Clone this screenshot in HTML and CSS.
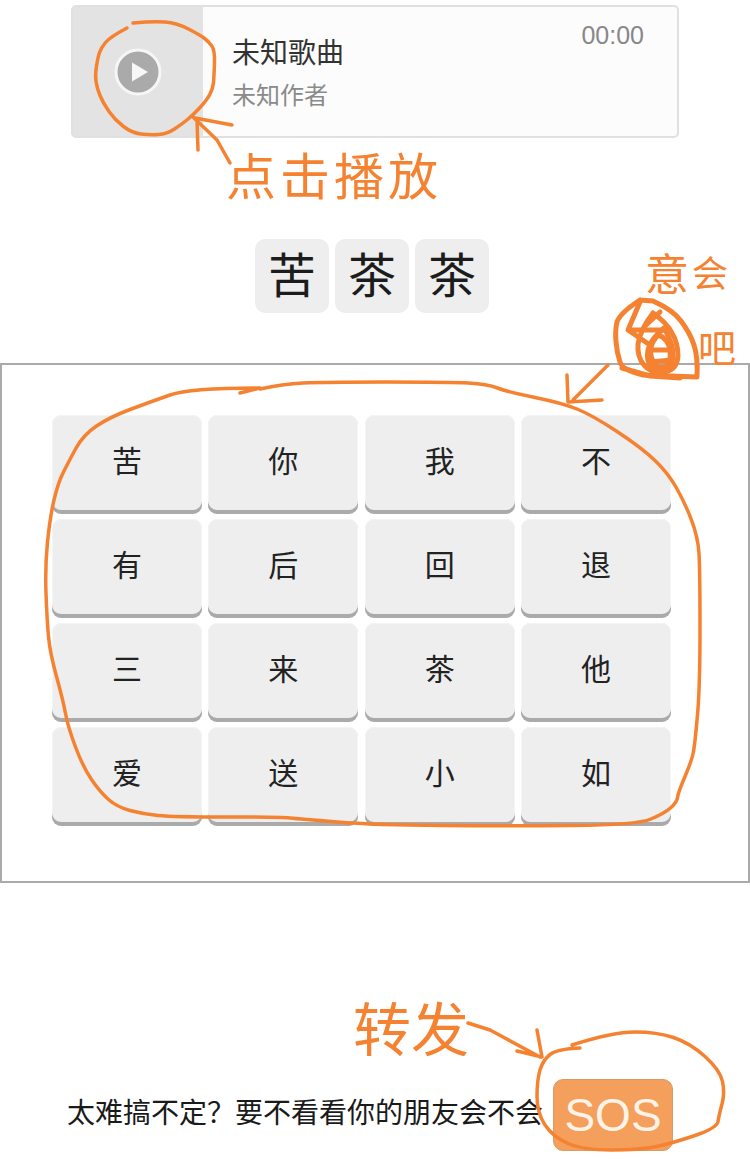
FILE: index.html
```html
<!DOCTYPE html>
<html lang="zh">
  <head>
    <meta charset="UTF-8" />
    <meta name="viewport" content="width=device-width, initial-scale=1.0" />
    <title>猜歌名</title>
    <link rel="stylesheet" href="styles.css">
  </head>
  <body>
    <main class="page">
      <div class="player">
        <div class="cover">
          <svg class="play" width="50" height="50" viewBox="0 0 50 50">
            <circle cx="25" cy="25" r="22" fill="#aaa" stroke="#f6f6f6" stroke-width="3" />
            <polygon points="19,15.5 19,34.5 35,25" fill="#f7f7f7" />
          </svg>
        </div>
        <div class="info">
          <p class="song">未知歌曲</p>
          <p class="author">未知作者</p>
        </div>
        <span class="time">00:00</span>
      </div>

      <div class="answer">
        <span class="slot">苦</span>
        <span class="slot">茶</span>
        <span class="slot">茶</span>
      </div>

      <div class="board">
        <div class="keys">
          <button class="key">苦</button>
          <button class="key">你</button>
          <button class="key">我</button>
          <button class="key">不</button>
          <button class="key">有</button>
          <button class="key">后</button>
          <button class="key">回</button>
          <button class="key">退</button>
          <button class="key">三</button>
          <button class="key">来</button>
          <button class="key">茶</button>
          <button class="key">他</button>
          <button class="key">爱</button>
          <button class="key">送</button>
          <button class="key">小</button>
          <button class="key">如</button>
        </div>
      </div>

      <div class="help">
        <p class="help-text">太难搞不定？要不看看你的朋友会不会</p>
        <button class="sos">SOS</button>
      </div>
    </main>

    <!-- pen marks on top of the screenshot -->
    <svg class="ink" width="750" height="1159" viewBox="0 0 750 1159">
      <!-- circle round the play button -->
      <path d="M127 28 Q110 37 105.5 42.5 Q101 48 99.5 52.5 Q98 57 96.5 66 Q95 75 96 81.5 Q97 88 100 95.5 Q103 103 109 111.5 Q115 120 123.5 126.5 Q132 133 141 134 Q150 135 158.5 134.5 Q167 134 174.5 129 Q182 124 187.5 119.5 Q193 115 200 107.5 Q207 100 210 94 Q213 88 213.5 82.5 Q214 77 214.5 63.5 Q215 50 211.5 45.5 Q208 41 204 38 Q200 35 188.5 29 Q177 23 165 22 Q153 21 133 23" />
      <path d="M230 163 L217 140 L193 117 M197 120 L198 150 M195 118 L232 125" />

      <!-- circle round the keys -->
      <path d="M260 389 Q283 384 303 383 Q323 382 386 382 Q450 382 468.5 383 Q487 384 497.5 388 Q508 392 535 397.5 Q562 403 577 409 Q592 415 617 431.5 Q642 448 655 460.5 Q668 473 676.5 488 Q685 503 691.5 520 Q698 537 699 553.5 Q700 570 700 628.5 Q700 687 697.5 715 Q695 743 693.5 751.5 Q692 760 685 776.5 Q678 793 677.5 797.5 Q677 802 671 807.5 Q665 813 651 819 Q637 825 572.5 825.5 Q508 826 441.5 825.5 Q375 825 337.5 822 Q300 819 290 818 Q280 817 226.5 817 Q173 817 158 815.5 Q143 814 130 810.5 Q117 807 108.5 799.5 Q100 792 91.5 779.5 Q83 767 75.5 747 Q68 727 65.5 713.5 Q63 700 56.5 676.5 Q50 653 48.5 636.5 Q47 620 46 593.5 Q45 567 47.5 542 Q50 517 54 500 Q58 483 63 473 Q68 463 75.5 449 Q83 435 96.5 426 Q110 417 130 409.5 Q150 402 170 395 Q190 388 260 388 L240 393" />

      <!-- scribbled out word and its arrow -->
      <path d="M608 365 L573 400 M567 375 L568 402 L602 400" />
      <g class="ink-heavy">
        <path d="M640 300 Q620 313 617 322 Q615 330 616 342 Q617 353 620 362 Q622 370 643 375 L697 377 Q698 357 694 345 Q690 333 681 321 Q673 310 653 301 L640 300" />
        <path d="M653 313 Q640 330 638 344 Q637 357 644 365 Q650 373 664 372 Q677 370 678 356 Q678 343 672 333 Q667 323 653 313" />
        <path d="M664 328 Q650 340 648 350 Q646 360 651 366 Q656 372 664 370 Q672 368 673 356 Q674 345 664 328" />
        <path d="M658 335 Q644 350 656 366 Q672 372 670 350 Q668 338 658 335" />
        <path d="M640 302 L628 330 L650 345 M632 330 L664 330 M652 350 L670 350 M650 362 L672 360 M660 312 L645 326 M622 368 L650 376 L680 378" />
      </g>

      <!-- circle round SOS -->
      <path d="M580 1048 Q557 1049 550 1054.5 Q543 1060 540 1070 Q537 1080 537 1096.5 Q537 1113 545 1125 Q553 1137 568 1143.5 Q583 1150 611.5 1150 Q640 1150 656.5 1146.5 Q673 1143 695 1135.5 Q717 1128 718 1121.5 Q719 1115 722 1104 Q725 1093 722.5 1081.5 Q720 1070 705 1056.5 Q690 1043 673.5 1037.5 Q657 1032 635 1032 Q613 1032 572 1045" />
      <path d="M468 1023 L490 1030 L540 1057 M537 1030 L542 1057 L517 1051" />
    </svg>
    <span class="note note-play">点击播放</span>
    <span class="note note-yi">意</span>
    <span class="note note-hui">会</span>
    <span class="note note-ba">吧</span>
    <span class="note note-send">转发</span>
  </body>
</html>
```

FILE: styles.css
```css
* {
  margin: 0;
  padding: 0;
  box-sizing: border-box;
}
body {
  position: relative;
  width: 750px;
  height: 1159px;
  overflow: hidden;
  background-color: #fff;
  font-family: "Noto Sans CJK SC", "Liberation Sans", sans-serif;
  color: #222;
}
.page {
  padding-top: 5px;
}

/* player */
.player {
  position: relative;
  display: flex;
  align-items: stretch;
  width: 608px;
  height: 133px;
  margin-left: 71px;
  background-color: #fcfcfc;
  border: 2px solid #e0e0e0;
  border-radius: 5px;
}
.cover {
  display: flex;
  justify-content: center;
  align-items: center;
  width: 130px;
  background-color: #e3e3e3;
}
.info {
  padding: 24px 0 0 29px;
}
.song {
  font-size: 28px;
  line-height: 40px;
  color: #333;
}
.author {
  margin-top: 3px;
  font-size: 24px;
  line-height: 40px;
  color: #8a8a8a;
}
.time {
  margin-left: auto;
  padding: 12px 33px 0 0;
  font-family: "Liberation Sans", sans-serif;
  font-size: 25px;
  line-height: 32px;
  color: #888;
}

/* answer slots */
.answer {
  display: flex;
  justify-content: center;
  gap: 6px;
  margin-top: 101px;
  margin-left: -6px;
}
.slot {
  display: flex;
  justify-content: center;
  align-items: center;
  width: 74px;
  height: 74px;
  padding-bottom: 8px;
  border-radius: 10px;
  background-color: #eee;
  font-size: 48px;
  color: #1c1c1c;
}

/* keyboard */
.board {
  height: 520px;
  margin-top: 50px;
  padding: 50px 0 0 50px;
  border: 2px solid #aaa;
}
.keys {
  display: grid;
  grid-template-columns: repeat(4, 150px);
  grid-auto-rows: 99px;
  column-gap: 6.33px;
  row-gap: 5px;
}
.key {
  border: none;
  border-radius: 9px;
  background-color: #eee;
  box-shadow: inset 0 -4px 0 #aaa, inset 0 0 0 1px #f4f4f4;
  padding-bottom: 12px;
  font-family: inherit;
  font-size: 30px;
  color: #222;
}

/* help row */
.help {
  display: flex;
  align-items: center;
  gap: 10px;
  margin-top: 196px;
  padding-left: 67px;
}
.help-text {
  padding-bottom: 8px;
  font-size: 28px;
  line-height: 40px;
  white-space: nowrap;
  color: #1a1a1a;
}
.sos {
  width: 120px;
  height: 72px;
  border: 1px solid #d99a68;
  border-radius: 10px;
  background-color: #f4a05c;
  font-family: "Liberation Sans", sans-serif;
  font-size: 46px;
  color: #fdf3e8;
}

/* pen marks */
.ink {
  position: absolute;
  left: 0;
  top: 0;
  fill: none;
  stroke: #f58231;
  stroke-width: 3.5;
  stroke-linecap: round;
  stroke-linejoin: round;
  pointer-events: none;
}
.ink-heavy {
  stroke-width: 5;
}
.note {
  position: absolute;
  color: #f58231;
  line-height: 1;
  white-space: nowrap;
}
.note-play {
  left: 226px;
  top: 148px;
  font-size: 50px;
  letter-spacing: 4px;
}
.note-yi {
  left: 645px;
  top: 250px;
  font-size: 44px;
}
.note-hui {
  left: 692px;
  top: 253px;
  font-size: 36px;
}
.note-ba {
  left: 698px;
  top: 327px;
  font-size: 38px;
}
.note-send {
  left: 353px;
  top: 997px;
  font-size: 58px;
}
```
